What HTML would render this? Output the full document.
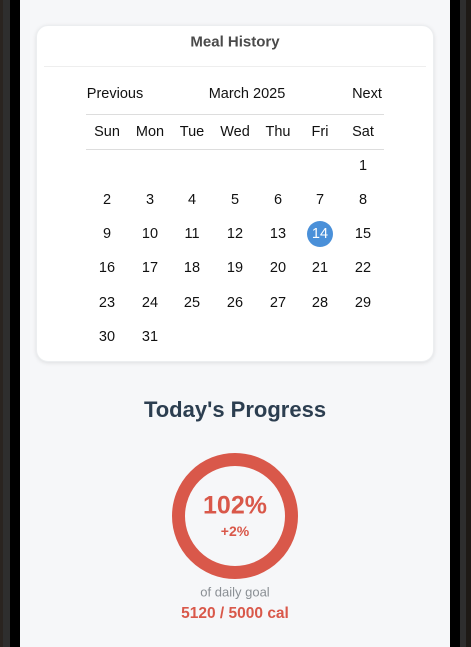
<!DOCTYPE html>
<html><head><style>
*{margin:0;padding:0;box-sizing:border-box}
body{width:471px;height:647px;background:#000;position:relative;overflow:hidden;font-family:"Liberation Sans",sans-serif}
.a{position:absolute}
.page{left:20px;top:0;width:430px;height:647px;background:#f6f7f9}
.card{left:36px;top:25px;width:398px;height:337px;background:#fff;border-radius:12px;box-shadow:0 1px 4px rgba(0,0,0,.1);border:1px solid #eceef0}
.t{position:absolute;white-space:nowrap;transform:translate(-50%,-50%)}
.c{font-size:14.5px;color:#111}
.line{position:absolute;height:1px;background:#ddd}
</style></head><body>
<div class="a" style="left:3px;top:0;width:7px;height:647px;background:#2e2e2e"></div>
<div class="a" style="left:0;top:0;width:3px;height:647px;background:#2a2420"></div>
<div class="a" style="left:460px;top:0;width:6px;height:647px;background:#2e2e2e"></div>
<div class="a" style="left:466px;top:0;width:5px;height:647px;background:#1e1a16"></div>
<div class="a page"></div>
<div class="a card"></div>
<div class="t" style="left:235px;top:42px;font-size:15px;font-weight:bold;color:#4a4a4a">Meal History</div>
<div class="line" style="left:44px;top:66px;width:382px;background:#eee"></div>
<div class="t c" style="left:115px;top:94px">Previous</div>
<div class="t c" style="left:247px;top:94px">March 2025</div>
<div class="t c" style="left:367px;top:94px">Next</div>
<div class="line" style="left:86px;top:114px;width:298px"></div>
<div class="line" style="left:86px;top:149px;width:298px"></div>
<div class="a" style="left:307px;top:221px;width:26px;height:26px;border-radius:50%;background:#4a90d9"></div>
<div id="cal"></div>
<div class="t" style="left:235px;top:410px;font-size:22px;font-weight:bold;color:#2c3e50">Today's Progress</div>
<div class="a" style="left:172px;top:453px;width:126px;height:126px;border-radius:50%;border:13px solid #d9584a"></div>
<div class="t" style="left:235px;top:506px;font-size:25px;font-weight:bold;color:#d9584a">102%</div>
<div class="t" style="left:235px;top:531px;font-size:14px;font-weight:bold;color:#d9584a">+2%</div>
<div class="t" style="left:235px;top:592px;font-size:13px;color:#8a8f94">of daily goal</div>
<div class="t" style="left:235px;top:614px;font-size:15.5px;font-weight:bold;color:#d9584a">5120 / 5000 cal</div>
<script>
var xs=[107,150,192,235,278,320,363],ys=[166,200,234,268,303,337],h='';
['Sun','Mon','Tue','Wed','Thu','Fri','Sat'].forEach(function(d,i){h+='<div class="t c" style="left:'+xs[i]+'px;top:132px">'+d+'</div>'});
for(var d=1;d<=31;d++){var p=d+5,r=Math.floor(p/7),c=p%7;h+='<div class="t c" style="left:'+xs[c]+'px;top:'+ys[r]+'px;'+(d==14?'color:#fff':'')+'">'+d+'</div>'}
document.getElementById('cal').innerHTML=h;
</script>
</body></html>
